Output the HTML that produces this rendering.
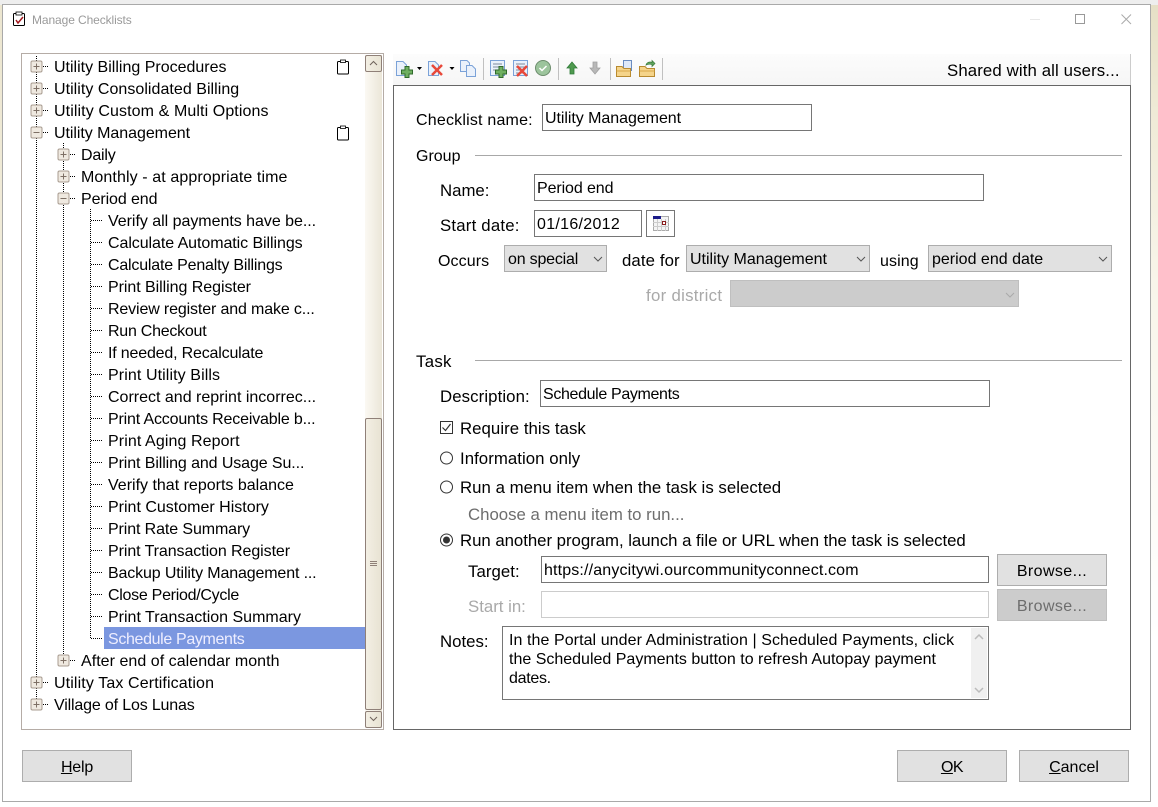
<!DOCTYPE html>
<html><head><meta charset="utf-8"><title>Manage Checklists</title>
<style>
html,body{margin:0;padding:0;width:1158px;height:807px;overflow:hidden;background:#fff}
body{position:relative;font:16px/20px "Liberation Sans",sans-serif;color:#000}
div{position:absolute;box-sizing:border-box}
.t{white-space:nowrap;height:20px;margin-top:2px}
.l{font-size:16.8px}
.i{border:1px solid #767676;background:#fff}
.s{background:#e1e1e1;border:1px solid #adadad}
.b{background:#e1e1e1;border:1px solid #adadad;text-align:center;line-height:33px;width:110px;height:32px}
u{text-decoration:underline}
svg{position:absolute;left:0;top:0}
</style></head><body>
<div style="left:0;top:0;width:1158px;height:5px;background:#eee"></div>
<div style="left:0;top:5px;width:2px;height:796px;background:linear-gradient(#ece6d0,#f5f1e2 60%,#fff 75%)"></div>
<div style="left:1151px;top:5px;width:7px;height:796px;background:linear-gradient(#e6e0c6,#f0ebd8 15%,#f8f5ea 35%,#fff 80%)"></div>
<div style="left:2px;top:4px;width:1149px;height:798px;border:1px solid #a9a9a9;background:#fff"></div>
<div class="t" style="left:32px;top:8px;font-size:12px;color:#9a9a9a;letter-spacing:-.1px">Manage Checklists</div>

<!-- tree box -->
<div style="left:21px;top:53px;width:363px;height:677px;border:1px solid #b5aca6"></div>
<div style="left:365px;top:55px;width:17px;height:673px;background:linear-gradient(90deg,#fbf9f3,#ebe6d8)"></div>
<div style="left:365px;top:418px;width:17px;height:292px;border:1px solid #8f8078;border-radius:2px;background:linear-gradient(90deg,#f3efe4,#e8e3d3)"></div>
<div style="left:365px;top:55px;width:17px;height:17px;border:1px solid #8f8078;border-radius:2px;background:linear-gradient(90deg,#f3efe4,#e8e3d3)"></div>
<div style="left:365px;top:711px;width:17px;height:17px;border:1px solid #8f8078;border-radius:2px;background:linear-gradient(90deg,#f3efe4,#e8e3d3)"></div>
<div style="left:104px;top:627px;width:261px;height:22px;background:#7b97e0"></div>

<div class="t" style="left:54px;top:56px">Utility Billing Procedures</div>
<div class="t" style="left:54px;top:78px;letter-spacing:.04px">Utility Consolidated Billing</div>
<div class="t" style="left:54px;top:100px;letter-spacing:.1px">Utility Custom &amp; Multi Options</div>
<div class="t" style="left:54px;top:122px;letter-spacing:-.05px">Utility Management</div>
<div class="t" style="left:81px;top:144px;letter-spacing:-.2px">Daily</div>
<div class="t" style="left:81px;top:166px;letter-spacing:.1px">Monthly - at appropriate time</div>
<div class="t" style="left:81px;top:188px;letter-spacing:-.1px">Period end</div>
<div class="t" style="left:108px;top:210px;letter-spacing:-.03px">Verify all payments have be...</div>
<div class="t" style="left:108px;top:232px;letter-spacing:-.07px">Calculate Automatic Billings</div>
<div class="t" style="left:108px;top:254px;letter-spacing:-.2px">Calculate Penalty Billings</div>
<div class="t" style="left:108px;top:276px;letter-spacing:-.05px">Print Billing Register</div>
<div class="t" style="left:108px;top:298px;letter-spacing:-.14px">Review register and make c...</div>
<div class="t" style="left:108px;top:320px;letter-spacing:-.25px">Run Checkout</div>
<div class="t" style="left:108px;top:342px;letter-spacing:-.18px">If needed, Recalculate</div>
<div class="t" style="left:108px;top:364px;letter-spacing:.1px">Print Utility Bills</div>
<div class="t" style="left:108px;top:386px">Correct and reprint incorrec...</div>
<div class="t" style="left:108px;top:408px;letter-spacing:-.17px">Print Accounts Receivable b...</div>
<div class="t" style="left:108px;top:430px;letter-spacing:.1px">Print Aging Report</div>
<div class="t" style="left:108px;top:452px;letter-spacing:-.1px">Print Billing and Usage Su...</div>
<div class="t" style="left:108px;top:474px">Verify that reports balance</div>
<div class="t" style="left:108px;top:496px">Print Customer History</div>
<div class="t" style="left:108px;top:518px;letter-spacing:-.11px">Print Rate Summary</div>
<div class="t" style="left:108px;top:540px;letter-spacing:-.08px">Print Transaction Register</div>
<div class="t" style="left:108px;top:562px;letter-spacing:-.14px">Backup Utility Management ...</div>
<div class="t" style="left:108px;top:584px;letter-spacing:-.28px">Close Period/Cycle</div>
<div class="t" style="left:108px;top:606px">Print Transaction Summary</div>
<div class="t" style="left:108px;top:628px;color:#eef;letter-spacing:-.35px">Schedule Payments</div>
<div class="t" style="left:81px;top:650px;letter-spacing:.04px">After end of calendar month</div>
<div class="t" style="left:54px;top:672px;letter-spacing:.12px">Utility Tax Certification</div>
<div class="t" style="left:54px;top:694px;letter-spacing:-.16px">Village of Los Lunas</div>

<!-- toolbar + panel -->
<div style="left:393px;top:54px;width:738px;height:31px;background:linear-gradient(#fcfcfc,#f6f6f6);border-right:1px solid #ccc"></div>
<div class="t l" style="left:947px;top:59px;letter-spacing:.12px">Shared with all users...</div>
<div style="left:393px;top:85px;width:738px;height:645px;border:1px solid #666;background:#fff"></div>

<div class="t" style="left:416px;top:109px;letter-spacing:.2px">Checklist name:</div>
<div class="i" style="left:542px;top:104px;width:270px;height:27px"></div>
<div class="t" style="left:545px;top:107px;letter-spacing:-.05px">Utility Management</div>
<div class="t" style="left:416px;top:145px">Group</div>
<div style="left:475px;top:155px;width:647px;height:1px;background:#a8a8a8"></div>
<div class="t l" style="left:440px;top:179px">Name:</div>
<div class="i" style="left:534px;top:174px;width:450px;height:27px"></div>
<div class="t" style="left:537px;top:177px;letter-spacing:-.1px">Period end</div>
<div class="t l" style="left:440px;top:214px;letter-spacing:.2px">Start date:</div>
<div class="i" style="left:534px;top:210px;width:108px;height:27px"></div>
<div class="t" style="left:537px;top:213px;letter-spacing:.3px">01/16/2012</div>
<div class="i" style="left:646px;top:210px;width:29px;height:27px"></div>
<div class="t" style="left:438px;top:250px;letter-spacing:.1px">Occurs</div>
<div class="s" style="left:504px;top:245px;width:103px;height:27px"></div>
<div class="t" style="left:508px;top:248px;letter-spacing:-.2px">on special</div>
<div class="t l" style="left:622px;top:249px;letter-spacing:.1px">date for</div>
<div class="s" style="left:686px;top:245px;width:184px;height:27px"></div>
<div class="t" style="left:690px;top:248px">Utility Management</div>
<div class="t" style="left:880px;top:250px;letter-spacing:.1px">using</div>
<div class="s" style="left:928px;top:245px;width:184px;height:27px"></div>
<div class="t" style="left:932px;top:248px">period end date</div>
<div class="t l" style="left:646px;top:284px;color:#a9a9a9;letter-spacing:.3px">for district</div>
<div style="left:730px;top:280px;width:289px;height:27px;background:#ccc;border:1px solid #bfbfbf"></div>

<div class="t l" style="left:416px;top:350px;letter-spacing:.3px">Task</div>
<div style="left:475px;top:360px;width:647px;height:1px;background:#a8a8a8"></div>
<div class="t l" style="left:440px;top:385px;letter-spacing:.1px">Description:</div>
<div class="i" style="left:540px;top:380px;width:450px;height:27px"></div>
<div class="t" style="left:543px;top:383px;letter-spacing:-.35px">Schedule Payments</div>
<div class="t l" style="left:460px;top:417px;letter-spacing:.05px">Require this task</div>
<div class="t l" style="left:460px;top:447px;letter-spacing:.05px">Information only</div>
<div class="t l" style="left:460px;top:476px;letter-spacing:.03px">Run a menu item when the task is selected</div>
<div class="t l" style="left:468px;top:503px;color:#6d6d6d">Choose a menu item to run...</div>
<div class="t l" style="left:460px;top:529px;letter-spacing:-.03px">Run another program, launch a file or URL when the task is selected</div>
<div class="t l" style="left:468px;top:560px;letter-spacing:.05px">Target:</div>
<div class="i" style="left:541px;top:556px;width:448px;height:27px"></div>
<div class="t" style="left:544px;top:559px;letter-spacing:.15px">https://anycitywi.ourcommunityconnect.com</div>
<div class="b" style="left:997px;top:554px;letter-spacing:.4px">Browse...</div>
<div class="t l" style="left:468px;top:595px;color:#a9a9a9;letter-spacing:0">Start in:</div>
<div class="i" style="left:541px;top:591px;width:448px;height:27px;border-color:#ccc"></div>
<div class="b" style="left:997px;top:589px;background:#ccc;border-color:#bfbfbf;color:#6d6d6d;letter-spacing:.4px">Browse...</div>
<div class="t l" style="left:440px;top:630px">Notes:</div>
<div class="i" style="left:502px;top:626px;width:487px;height:74px"></div>
<div style="left:971px;top:628px;width:16px;height:70px;background:#f0f0f0"></div>
<div class="t" style="left:509px;top:629px;letter-spacing:.07px">In the Portal under Administration | Scheduled Payments, click</div>
<div class="t" style="left:509px;top:648px">the Scheduled Payments button to refresh Autopay payment</div>
<div class="t" style="left:509px;top:667px;letter-spacing:-.3px">dates.</div>

<div class="b" style="left:22px;top:750px;letter-spacing:-.2px"><u>H</u>elp</div>
<div class="b" style="left:897px;top:750px;letter-spacing:-.5px"><u>O</u>K</div>
<div class="b" style="left:1019px;top:750px"><u>C</u>ancel</div>

<svg width="1158" height="807" viewBox="0 0 1158 807" fill="none">
<defs>
<g id="plus"><rect x="-5.500" y="-5.500" width="11" height="11" rx="1.500" fill="#efe9e0" stroke="#a89c90"/><path d="M-3 0H3M0-3V3" stroke="#7d6f65"/></g>
<g id="minus"><rect x="-5.500" y="-5.500" width="11" height="11" rx="1.500" fill="#efe9e0" stroke="#a89c90"/><path d="M-3 0H3" stroke="#7d6f65"/></g>
<g id="gp"><path d="M-2-5.500H2V-2H5.500V2H2V5.500H-2V2H-5.500V-2H-2Z" fill="#6fb060" stroke="#2f6a2b"/></g>
<g id="rx"><path d="M-5-5 5 5M5-5-5 5" stroke="#e8483a" stroke-width="2.500"/></g>
<g id="chev"><path d="M-4-2 0 2 4-2" stroke="#555"/></g>
</defs>
<!-- title icon -->
<rect x="13.500" y="13.500" width="11" height="12" rx="1" stroke="#000" fill="#fff"/>
<rect x="16" y="12" width="6" height="3" fill="#fff" stroke="#000" stroke-width=".8"/>
<path d="M16 20 18 23 23 17" stroke="#a3161c" stroke-width="1.500"/>
<!-- window controls -->
<path d="M1030 19.500H1040" stroke="#e8e8e8"/>
<rect x="1075.500" y="14.500" width="9" height="9" stroke="#999"/>
<path d="M1121.500 14.500 1131 24M1131 14.500 1121.500 24" stroke="#aaa"/>
<!-- tree lines -->
<g stroke="#000" stroke-dasharray="1 1" shape-rendering="crispEdges">
<path d="M36.500 56V704M43 66.500H49M43 88.500H49M43 110.500H49M43 132.500H49M43 682.500H49M43 704.500H49"/>
<path d="M63.500 143V660M70 154.500H76M70 176.500H76M70 198.500H76M70 660.500H76"/>
<path d="M90.500 209V638"/>
<path d="M91 220.500H103M91 242.500H103M91 264.500H103M91 286.500H103M91 308.500H103M91 330.500H103M91 352.500H103M91 374.500H103M91 396.500H103M91 418.500H103M91 440.500H103M91 462.500H103M91 484.500H103M91 506.500H103M91 528.500H103M91 550.500H103M91 572.500H103M91 594.500H103M91 616.500H103M91 638.500H103"/>
</g>
<use href="#plus" x="36.500" y="66.500"/><use href="#plus" x="36.500" y="88.500"/><use href="#plus" x="36.500" y="110.500"/><use href="#minus" x="36.500" y="132.500"/>
<use href="#plus" x="36.500" y="682.500"/><use href="#plus" x="36.500" y="704.500"/>
<use href="#plus" x="63.500" y="154.500"/><use href="#plus" x="63.500" y="176.500"/><use href="#minus" x="63.500" y="198.500"/><use href="#plus" x="63.500" y="660.500"/>
<!-- clipboards -->
<g stroke="#000" fill="#fff">
<rect x="337.500" y="61.500" width="11" height="12.500" rx="1"/><rect x="340.500" y="60" width="5" height="2.500" stroke-width=".8"/>
<rect x="337.500" y="127.500" width="11" height="12.500" rx="1"/><rect x="340.500" y="126" width="5" height="2.500" stroke-width=".8"/>
</g>
<!-- scrollbar glyphs -->
<path d="M370 65 373.500 61.500 377 65" stroke="#6f635b"/>
<path d="M370 717 373.500 720.500 377 717" stroke="#6f635b"/>
<path d="M370 561.500H377M370 563.500H377M370 565.500H377" stroke="#8f8078"/>
<!-- toolbar icons -->
<g stroke="#7ba2d8" fill="#eaf1fb">
<path d="M396.500 61.500H403L406.500 65V75.500H396.500Z"/>
<path d="M428.500 61.500H435L438.500 65V75.500H428.500Z"/>
<path d="M460.500 60.500H467L469.500 63V71.500H460.500Z"/><path d="M466.500 65.500H472L475.500 69V76.500H466.500Z"/>
<rect x="490.500" y="60.500" width="14" height="15"/><rect x="513.500" y="60.500" width="14" height="15"/>
<path d="M493 64H502M493 67H502M493 70H497M516 64H525M516 67H525M516 70H525M516 73H525" stroke="#7d8a9c"/>
</g>
<use href="#gp" x="407" y="72"/><use href="#rx" x="437" y="70"/><use href="#gp" x="501" y="72"/><use href="#rx" x="522" y="71"/>
<path d="M417 67H422L419.500 70ZM449.500 67H454.500L452 70Z" fill="#000"/>
<path d="M483.500 58V80M558.500 58V80M610.500 58V80M662.500 58V80" stroke="#c0c0c0"/>
<circle cx="543" cy="68" r="7.500" fill="#9cc49c" stroke="#6c8c6c"/>
<path d="M539.500 68 542 70.500 546.500 66" stroke="#fff" stroke-width="1.500"/>
<path d="M572 62 577 68H574V74H570V68H567Z" fill="#4f9a4f" stroke="#2f7a38" stroke-width=".8"/>
<path d="M595 74 590 68H593V62H597V68H600Z" fill="#b8b8b8" stroke="#a0a0a0" stroke-width=".8"/>
<rect x="623.500" y="60.500" width="8" height="10" fill="#dfe9f8" stroke="#6a8cc0"/>
<path d="M616.500 66.500H622L624 68.500H630.500V76.500H616.500Z" fill="#f5d48a" stroke="#b88a30"/>
<path d="M616.500 71H630.500" stroke="#d9a84a"/>
<path d="M639.500 66.500H645L647 68.500H654.500V76.500H639.500Z" fill="#f5d48a" stroke="#b88a30"/>
<path d="M639.500 71H654.500" stroke="#d9a84a"/>
<path d="M646 65C647 62 650 61.500 652 62.500V60.500L655 63.500 652 66.500V64.500C650 64 648 64 646 65Z" fill="#5fa45f" stroke="#3a7a3a" stroke-width=".7"/>
<!-- calendar -->
<rect x="653.500" y="216.500" width="15" height="14" fill="#f4f4f4" stroke="#aaa"/>
<rect x="653.500" y="216.500" width="7" height="2" fill="#1c1c8a" stroke="#1c1c8a"/>
<path d="M653 222.500H669M653 226.500H669M657.500 219V231M661.500 219V231M665.500 219V231" stroke="#ccc"/>
<rect x="662.500" y="221.500" width="3" height="3" fill="#fff" stroke="#8a1c1c"/>
<!-- select arrows -->
<use href="#chev" x="598" y="259"/><use href="#chev" x="861" y="259"/><use href="#chev" x="1103" y="259"/>
<path d="M1006 293 1010 297 1014 293" stroke="#aaa"/>
<!-- checkbox + radios -->
<rect x="440.500" y="421.500" width="12" height="12" stroke="#333" fill="#fff"/>
<path d="M442.500 427.500 445.500 430.500 450.500 424" stroke="#333" stroke-width="1.200"/>
<circle cx="446.500" cy="458" r="6" stroke="#333" fill="#fff"/>
<circle cx="446.500" cy="487" r="6" stroke="#333" fill="#fff"/>
<circle cx="446.500" cy="540" r="6" stroke="#333" fill="#fff"/>
<circle cx="446.500" cy="540" r="3.500" fill="#333"/>
<!-- notes scroll arrows -->
<path d="M975 639 979 635 983 639M975 688 979 692 983 688" stroke="#bbb" stroke-width="1.500"/>
</svg>
</body></html>
